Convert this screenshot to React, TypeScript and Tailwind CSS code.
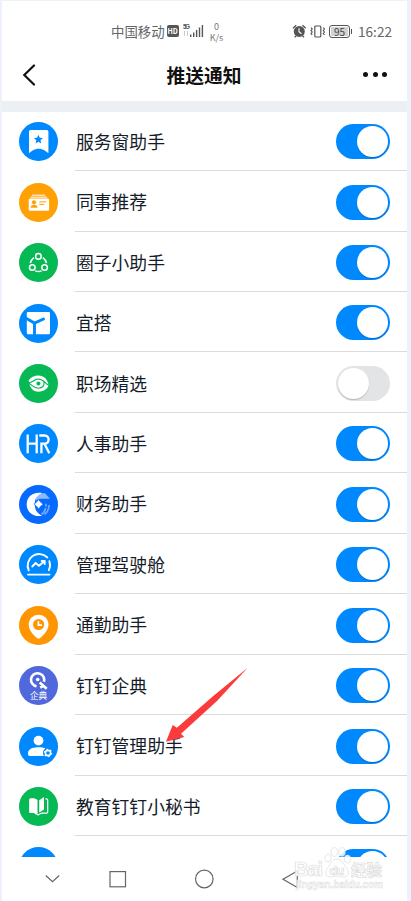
import type { ReactNode } from "react";

type NoticeItem = {
  name: string;
  color: string;
  enabled: boolean;
  icon: ReactNode;
};

const items: NoticeItem[] = [
  {
    name: "服务窗助手",
    color: "text-[#0089ff]",
    enabled: true,
    icon: (
      <>
        <path
          fill="#fff"
          d="M11.5 8h16.300a1.600 1.600 0 0 1 1.600 1.600V31c-2.500-1.600-5-4.300-9.700-4.300S12.500 29.400 10 31V9.600A1.600 1.600 0 0 1 11.500 8z"
        />
        <path
          fill="currentColor"
          d="M19.400 12.700l1.300 3 3.200.3-2.400 2.200.7 3.200-2.800-1.700-2.800 1.700.7-3.200-2.400-2.200 3.200-.3z"
        />
      </>
    ),
  },
  {
    name: "同事推荐",
    color: "text-[#ffa005]",
    enabled: true,
    icon: (
      <>
        <path stroke="#fff" d="M13 12.200h13.200M11.500 14.200h16.500" />
        <rect x="9.700" y="15.500" width="20.400" height="12.200" rx="1.500" fill="#fff" />
        <circle cx="15" cy="19.300" r="2.100" fill="currentColor" />
        <path fill="currentColor" d="M11.600 24.700c0-4 7-4 7 0z" />
        <path stroke="currentColor" d="M20.300 18.900h7M20.300 21.400h5" />
      </>
    ),
  },
  {
    name: "圈子小助手",
    color: "text-[#07b955]",
    enabled: true,
    icon: (
      <g fill="none" stroke="#fff" strokeWidth="1.500">
        <circle cx="19.400" cy="13.400" r="2.800" />
        <circle cx="13.300" cy="24.500" r="2.800" />
        <circle cx="25.600" cy="24.500" r="2.800" />
        <path d="M15 14.600a8.500 8.500 0 0 0-3.700 5.600M23.800 14.600a8.500 8.500 0 0 1 3.700 5.600M16.200 27.900q3.200 1.100 6.400 0" />
      </g>
    ),
  },
  {
    name: "宜搭",
    color: "text-[#0089ff]",
    enabled: true,
    icon: (
      <>
        <rect x="7.800" y="8" width="23.200" height="22.200" rx="1.200" fill="#fff" />
        <path
          fill="none"
          stroke="currentColor"
          strokeWidth="2.900"
          strokeLinecap="round"
          d="M7 14.200l8.500 4.900 9-4.100M15.500 19v12.500"
        />
      </>
    ),
  },
  {
    name: "职场精选",
    color: "text-[#07b955]",
    enabled: false,
    icon: (
      <>
        <path
          fill="#fff"
          d="M9.700 16.300c2-3 5.800-4.700 9.700-4.700 5.600 0 9 3.400 10.400 10-2.200 4.300-6 6.200-10.200 6.200-5.700 0-9.400-4.300-9.900-11.500z"
        />
        <path
          fill="none"
          stroke="currentColor"
          strokeWidth="1.200"
          d="M9.200 18.300c4 1.500 4.700-3.200 10-3.200 6.500 0 6.800 5.200 11 6.200M9.800 19.600c3.500.8 4.400 4.600 9.700 4.600 4.800 0 6.200-3.400 5.300-6.100"
        />
        <circle cx="19.400" cy="19.600" r="3" fill="none" stroke="#fff" strokeWidth="1.700" />
        <circle cx="19.400" cy="19.600" r="2" fill="currentColor" />
      </>
    ),
  },
  {
    name: "人事助手",
    color: "text-[#0089ff]",
    enabled: true,
    icon: (
      <path
        fill="none"
        stroke="#fff"
        strokeWidth="2.300"
        d="M8.700 10.600v18.700M17.700 10.600v18.700M8.700 19.700h9M20.300 11.500h5.400c5.200 0 5.200 8.200 0 8.200h-3.300v9.600M25.600 20l4.700 9.300"
      />
    ),
  },
  {
    name: "财务助手",
    color: "text-[#066aff]",
    enabled: true,
    icon: (
      <>
        <path fill="#8dbaff" d="M18.500 8.200h7.500l5 5.600h-9.500c-2 0-3.400.8-4.500 2-.2-3.200.3-5.400 1.500-7.600z" />
        <path
          fill="#fff"
          d="M23 8C14 6.300 7.700 11.800 7.700 19.300S14 32.500 23 30.800C18 28.500 15.700 24.500 15.700 19.300S18 10.200 23 8z"
        />
        <path
          fill="none"
          stroke="#70a7ff"
          strokeWidth="1.700"
          d="M22.500 29.500c2.700-1.700 3.700-3.800 4-6.500M25.500 29.500c2.900-2 4.400-5.800 4.600-9.500M27 18.800v3"
        />
        <path
          fill="#fff"
          stroke="currentColor"
          strokeWidth="0.700"
          d="M19.600 14.500q1.700 3 4.700 4.700-3 1.700-4.700 4.700-1.700-3-4.700-4.700 3-1.700 4.700-4.700z"
        />
      </>
    ),
  },
  {
    name: "管理驾驶舱",
    color: "text-[#0089ff]",
    enabled: true,
    icon: (
      <g fill="none" stroke="#fff" strokeWidth="1.900" strokeLinecap="round" strokeLinejoin="round">
        <path d="M9.700 25.300A11.500 11.500 0 0 1 28.300 12.400M30.400 16.200a12 12 0 0 1-.6 9M9 29.600h21.500" />
        <path d="M13.300 21.500l3.300-3.500 3.300 2.700 5.300-4.200M22.700 16h3v3" />
      </g>
    ),
  },
  {
    name: "通勤助手",
    color: "text-[#ff9500]",
    enabled: true,
    icon: (
      <>
        <path
          fill="#fff"
          d="M19.600 8.700c5.500 0 9.900 4.300 9.900 9.700 0 5.800-4.300 9.700-8.400 13.700a2.100 2.100 0 0 1-3 0c-4.100-4-8.400-7.900-8.400-13.700 0-5.400 4.400-9.700 9.900-9.700z"
        />
        <circle cx="19.600" cy="18.500" r="5.600" fill="currentColor" />
        <path fill="none" stroke="#fff" strokeWidth="1.700" d="M19.400 15.200v4h3.700" />
      </>
    ),
  },
  {
    name: "钉钉企典",
    color: "text-[#5068dc]",
    enabled: true,
    icon: (
      <>
        <path
          fill="none"
          stroke="#fff"
          strokeWidth="2.600"
          d="M17.500 20.300a6.600 6.600 0 1 1 7.700-6.600 6.600 6.600 0 0 1-.4 2M20.700 16.500l7 6.200M25.200 19.500l-4 2"
        />
        <circle cx="18.700" cy="13.500" r="1.800" fill="#fff" />
        <text x="19.600" y="33" textAnchor="middle" fill="#fff" className="text-[8.700px]">
          企典
        </text>
      </>
    ),
  },
  {
    name: "钉钉管理助手",
    color: "text-[#0089ff]",
    enabled: true,
    icon: (
      <>
        <circle cx="19.500" cy="13.600" r="4.900" fill="#fff" />
        <path
          fill="#fff"
          d="M9 26.500c0-4.300 4-6.300 10.300-6.300 3.200 0 5.500.4 7.200 1.300-2.800 1.900-3.100 5-1.500 7.500H11.200A2.200 2.200 0 0 1 9 26.500z"
        />
        <circle cx="29" cy="26" r="2.600" fill="none" stroke="#fff" strokeWidth="1.600" />
        <circle cx="29" cy="26" r="3.700" fill="none" stroke="#fff" strokeWidth="1.100" strokeDasharray="1.600 2.270" />
      </>
    ),
  },
  {
    name: "教育钉钉小秘书",
    color: "text-[#07b955]",
    enabled: true,
    icon: (
      <>
        <path
          fill="#fff"
          d="M12 11.300c2.800-.3 4.900.2 6.500 1.600v14.300c-1.900-1.100-4.100-1.300-6.500-1.100-1.200 0-1.900-.6-1.900-1.700V13c0-1 .7-1.600 1.900-1.700z"
        />
        <path fill="#fff" d="M20.200 13.300l4.800-3.200v12.300l-4.800 3.200z" />
        <path
          fill="none"
          stroke="#fff"
          strokeWidth="1.200"
          d="M26.400 11.900h1.100c.8 0 1.200.4 1.200 1.100v12c0 .8-.4 1.200-1.200 1.200h-4.200c-1.800 0-2.600.9-3.900 1.700-1.200-.8-2-1.300-3.700-1.600"
        />
      </>
    ),
  },
  {
    name: "",
    color: "text-[#0089ff]",
    enabled: true,
    icon: null,
  },
];

const Toggle = ({ enabled }: { enabled: boolean }) => (
  <div
    className={
      enabled
        ? "flex h-[35px] w-[54px] shrink-0 items-center justify-end rounded-full bg-[#0089ff] px-[2px]"
        : "flex h-[35px] w-[54px] shrink-0 items-center justify-start rounded-full bg-[#e3e4e6] px-[2px]"
    }
  >
    <div className="h-[31px] w-[31px] rounded-full bg-white shadow-[0_1px_1px_rgba(0,0,0,0.2)]" />
  </div>
);

const NoticeRow = ({ item }: { item: NoticeItem }) => (
  <div className="flex h-[60.450px] shrink-0 pl-[17px]">
    <svg viewBox="0 0 39 39" className={`mt-[11.500px] h-[39px] w-[39px] shrink-0 ${item.color}`}>
      <circle cx="19.500" cy="19.500" r="19.500" fill="currentColor" />
      {item.icon}
    </svg>
    <div className="ml-[17px] flex flex-1 items-center justify-between border-b border-[#dadbdd] pt-[2.500px] pr-[17px]">
      <span className="pl-px text-[17.800px] leading-none text-[#141c2a]">{item.name}</span>
      <Toggle enabled={item.enabled} />
    </div>
  </div>
);

const StatusBar = () => (
  <div className="flex h-[45px] items-end pr-[15px] pb-[5px] pl-[109px] text-[#666]">
    <span className="shrink-0 text-[13.400px] leading-[20px]">中国移动</span>
    <div className="mb-[4px] ml-[2px] flex h-[12px] w-[12px] shrink-0 items-center justify-center rounded-[2px] bg-[#555] text-[7px] leading-[12px] font-bold text-white">
      HD
    </div>
    <svg viewBox="0 0 21 15" className="mb-[3px] ml-[4px] h-[15px] w-[21px] shrink-0 overflow-visible">
      <text
        x="0"
        y="6"
        className="fill-[#555] font-['Liberation_Sans',sans-serif] text-[6.500px] font-bold"
        textLength="7"
      >
        5G
      </text>
      <path stroke="#ccc" d="M1.500 8v5M4.500 8v5" />
      <path stroke="#555" strokeWidth="1.400" d="M7.700 11.500V14M10.700 9.500V14M13.600 7v7M16.500 4.500V14M19.400 2v12" />
    </svg>
    <div className="-mb-[2px] ml-[5px] flex w-[16px] shrink-0 flex-col items-center text-[9px] leading-[11px] text-[#777]">
      <span className="h-[11px]">0</span>
      <span className="h-[11px]">K/s</span>
    </div>
    <div className="flex-1" />
    <svg viewBox="0 0 15 14" className="mb-[3px] h-[14px] w-[15px] shrink-0">
      <circle cx="7.300" cy="7.400" r="5.500" fill="#555" />
      <path fill="none" stroke="#555" strokeWidth="1.300" d="M1 4.300l3.200-3M13.700 4.300l-3.200-3M2.700 13.200l1.500-1.500M12 13.200l-1.500-1.500" />
      <path fill="none" stroke="#fff" strokeWidth="1.100" d="M7 4.200v3.600l2.500 1.900" />
    </svg>
    <svg viewBox="0 0 15 13" className="mb-[3px] ml-[3px] h-[13px] w-[15px] shrink-0">
      <rect x="4.800" y="1" width="6" height="11" rx="1" fill="none" stroke="#555" strokeWidth="1.200" />
      <path fill="none" stroke="#555" strokeWidth="1.200" d="M1 2.500l1.200 1.500L1 5.500 2.200 7 1 8.500 2.200 10M13.300 2.500L14.500 4l-1.200 1.500L14.500 7l-1.200 1.500 1.200 1.500" />
    </svg>
    <div className="mb-[3px] ml-[4px] flex shrink-0 items-center">
      <div className="flex h-[13px] w-[21px] items-center justify-center rounded-[3px] border border-[#555] p-px">
        <span className="w-full rounded-[1px] bg-[#d2d2d2] text-center text-[10px] leading-[9px] text-[#444]">95</span>
      </div>
      <div className="ml-px h-[5px] w-px bg-[#555]" />
    </div>
    <span className="ml-[6px] shrink-0 text-[13.600px] leading-[20px]">16:22</span>
  </div>
);

const TitleBar = () => (
  <div className="flex h-[55px] items-center justify-between pt-[2px] pr-[20px] pl-[20px]">
    <svg viewBox="0 0 14 22" className="h-[22px] w-[14px]">
      <path fill="none" stroke="#111" strokeWidth="2.200" strokeLinecap="round" d="M12 1.500L2.300 11 12 20.500" />
    </svg>
    <h1 className="pt-px pl-[9px] text-[18.800px] leading-none font-bold text-[#111]">推送通知</h1>
    <div className="flex gap-[4.500px]">
      <span className="h-[5px] w-[5px] rounded-full bg-[#111]" />
      <span className="h-[5px] w-[5px] rounded-full bg-[#111]" />
      <span className="h-[5px] w-[5px] rounded-full bg-[#111]" />
    </div>
  </div>
);

const NavBar = () => (
  <div className="flex h-[44px] items-center bg-white pl-[43px]">
    <svg viewBox="0 0 256 20" className="h-[20px] w-[256px]" fill="none" stroke="#666" strokeWidth="1.200">
      <path d="M.800 6.500l6.700 6.300 6.700-6.300" />
      <rect x="65" y="2.600" width="15.500" height="15.200" />
      <circle cx="159.300" cy="10" r="8.800" />
      <path d="M252.300 2v16.500L238 10.200z" />
    </svg>
  </div>
);

// translucent logo with a faint grey edge, lies over the last row and the nav bar
const Watermark = () => (
  <svg
    viewBox="0 0 96 48"
    className="pointer-events-none absolute top-[844px] left-[291px] h-[48px] w-[96px] font-['Liberation_Sans','Noto_Sans_CJK_SC',sans-serif] font-bold"
  >
    <g fill="#fff" fillOpacity="0.850" stroke="#dcdcdc" strokeWidth="0.700">
      <ellipse cx="37" cy="14" rx="3.200" ry="4" />
      <ellipse cx="43.300" cy="8" rx="3.200" ry="4.300" />
      <ellipse cx="51" cy="8" rx="3.200" ry="4.300" />
      <ellipse cx="56.500" cy="15" rx="3.200" ry="4" />
      <path d="M46 15c5 0 7 6 9.500 9 4 5 1 9-3 9-3 0-4-1-6.500-1s-4 1-7 1c-4 0-6-5-2.500-9 3-3.500 4.500-9 9.500-9z" />
      <text x="3" y="32" textLength="29" className="text-[20px]">
        Bai
      </text>
      <text x="38.500" y="31" textLength="15" className="text-[13px]">
        du
      </text>
      <text x="60" y="32" textLength="31" className="text-[15.500px]">
        经验
      </text>
      <text x="5" y="44" textLength="87" className="text-[10px]" strokeWidth="0.500">
        jingyan.baidu.com
      </text>
    </g>
  </svg>
);

const App = () => {
  return (
    <div className="relative h-[901px] w-[411px] overflow-hidden bg-[#edf2fa] pt-px pr-[4px] pl-[2px] font-['Noto_Sans_CJK_SC',sans-serif]">
      <div className="flex h-[900px] flex-col bg-white">
        <StatusBar />
        <TitleBar />
        <div className="h-[11px] shrink-0 bg-[#ecf0f4]" />
        <div className="h-[745px] overflow-hidden">
          <div className="-mt-[1.300px] flex flex-col">
            {items.map((item, index) => (
              <NoticeRow key={index} item={item} />
            ))}
          </div>
        </div>
        <NavBar />
      </div>

      {/* arrow pointing at the admin assistant row */}
      <svg viewBox="0 0 84 76" className="pointer-events-none absolute top-[667px] left-[165px] h-[76px] w-[84px]">
        <path fill="#fb3b3b" d="M82.700.800L48 29.300 11.900 60.800 7.700 58 1 74.700 19.300 70 16 66.800 52 34z" />
      </svg>

      <Watermark />
    </div>
  );
};

export default App;
